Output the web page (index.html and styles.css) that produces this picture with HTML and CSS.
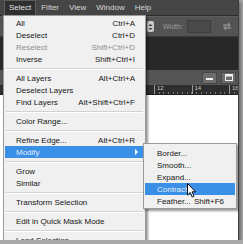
FILE: index.html
```html
<!doctype html>
<html lang=en>
  <head>
    <meta charset=utf-8 />
    <title>Select menu</title>
    <link rel="stylesheet" href="styles.css">
  </head>
  <body>
    <div class="screen">
      <div class="menubar">
        <span class="menubar-item menubar-open">Select</span>
        <span class="menubar-item">Filter</span>
        <span class="menubar-item">View</span>
        <span class="menubar-item">Window</span>
        <span class="menubar-item">Help</span>
      </div>

      <div class="options">
        <span class="spinner">
          <svg width="5" height="8" viewBox="0 0 5 8"><path d="M0.5 3 L2.5 1 L4.5 3 Z M0.5 5 L2.5 7 L4.5 5 Z" fill="#3a3a3a"/></svg>
        </span>
        <span class="options-label">Width:</span>
        <span class="options-input"></span>
        <svg class="swap" width="10" height="9" viewBox="0 0 10 9">
          <path d="M1 3 H8 M6 1 L8 3 L6 5 M9 6 H2 M4 4 L2 6 L4 8" stroke="#8a8a8a" stroke-width="1.3" fill="none"/>
        </svg>
      </div>

      <div class="pasteboard"></div>

      <div class="tabbar">
        <span class="win-btn"><svg width="7" height="7" viewBox="0 0 7 7"><rect x="0" y="4" width="7" height="2" fill="#f2f2f2"/></svg></span>
        <span class="win-btn"><svg width="8" height="7" viewBox="0 0 8 7"><rect x="0.5" y="0.5" width="7" height="6" fill="none" stroke="#f2f2f2"/><rect x="0.5" y="0.5" width="7" height="2" fill="#f2f2f2"/></svg></span>
      </div>

      <div class="ruler">
        <span class="ruler-mark">12</span>
        <span class="ruler-mark">14</span>
        <span class="ruler-mark">16</span>
      </div>

      <div class="canvas"></div>

      <div class="menu">
        <div class="item"><span>All</span><span>Ctrl+A</span></div>
        <div class="item"><span>Deselect</span><span>Ctrl+D</span></div>
        <div class="item disabled"><span>Reselect</span><span>Shift+Ctrl+D</span></div>
        <div class="item"><span>Inverse</span><span>Shift+Ctrl+I</span></div>
        <div class="sep"></div>
        <div class="item"><span>All Layers</span><span>Alt+Ctrl+A</span></div>
        <div class="item"><span>Deselect Layers</span></div>
        <div class="item"><span>Find Layers</span><span>Alt+Shift+Ctrl+F</span></div>
        <div class="sep"></div>
        <div class="item"><span>Color Range...</span></div>
        <div class="sep"></div>
        <div class="item"><span>Refine Edge...</span><span>Alt+Ctrl+R</span></div>
        <div class="item active"><span>Modify</span><span class="arrow"></span></div>
        <div class="sep"></div>
        <div class="item"><span>Grow</span></div>
        <div class="item"><span>Similar</span></div>
        <div class="sep"></div>
        <div class="item"><span>Transform Selection</span></div>
        <div class="sep"></div>
        <div class="item"><span>Edit in Quick Mask Mode</span></div>
        <div class="sep"></div>
        <div class="item"><span>Load Selection...</span></div>
      </div>

      <div class="submenu">
        <div class="item"><span>Border...</span></div>
        <div class="item"><span>Smooth...</span></div>
        <div class="item"><span>Expand...</span></div>
        <div class="item active"><span>Contract...</span></div>
        <div class="item"><span>Feather...</span><span>Shift+F6</span></div>
      </div>

      <svg class="cursor" width="10" height="15" viewBox="0 0 10 15">
        <path d="M0.5 0.5 V12 L3.2 9.4 L5.2 14 L7 13.2 L5 8.8 H8.6 Z" fill="#fff" stroke="#111" stroke-width="1"/>
      </svg>
    </div>
  </body>
</html>
```

FILE: styles.css
```css
body {
  background: #a9a9a9;
  margin: 0;
  padding: 0;
  font-family: 'Liberation Sans', Arial, sans-serif;
  font-size: 8px;
}

.screen {
  position: relative;
  width: 238px;
  height: 240px;
  overflow: hidden;
  background: #ffffff;
  border-right: 1px solid #3c3c3c;
  box-shadow: 2px 2px 3px #6a6a6a;
  display: flex;
  flex-direction: column;
}

.menubar {
  height: 16px;
  flex: 0 0 16px;
  display: flex;
  align-items: stretch;
  padding-left: 4px;
  background: #454545;
  border-bottom: 1px solid #2c2c2c;
  box-sizing: border-box;
}

.menubar-item {
  padding: 0 5px;
  color: #d8d8d8;
  line-height: 15px;
  font-size: 8px;
}

.menubar-open {
  background: #2f2f2f;
  box-shadow: inset 1px 1px 0 #5c5c5c, inset -1px 0 0 #5c5c5c;
  color: #e6e6e6;
}

.options {
  flex: 0 0 21px;
  display: flex;
  align-items: center;
  background: #535353;
  border-top: 1px solid #5e5e5e;
  border-bottom: 1px solid #3a3a3a;
  box-sizing: border-box;
  padding-left: 147px;
}

.spinner {
  display: flex;
  align-items: center;
  justify-content: center;
  width: 7px;
  height: 11px;
  background: #c9c9c9;
  border-radius: 2px;
}

.options-label {
  margin-left: 9px;
  color: #9c9c9c;
  font-size: 7px;
}

.options-input {
  margin-left: 4px;
  width: 22px;
  height: 11px;
  background: #4a4a4a;
  border: 1px solid #3d3d3d;
}

.swap {
  margin-left: 11px;
}

.pasteboard {
  flex: 0 0 33px;
  background: #282828;
}

.tabbar {
  flex: 0 0 15px;
  display: flex;
  justify-content: flex-end;
  align-items: center;
  gap: 4px;
  padding-right: 2px;
  background: #555555;
  box-sizing: border-box;
}

.win-btn {
  width: 15px;
  height: 12px;
  display: flex;
  align-items: center;
  justify-content: center;
  background: #6c6c6c;
  border: 1px solid #474747;
  box-sizing: border-box;
}

.ruler {
  flex: 0 0 10px;
  display: flex;
  padding-left: 154px;
  background: #2e2e2e repeating-linear-gradient(90deg, #7a7a7a 0 1px, transparent 1px 4.6875px) 154px 7px / 100% 3px no-repeat;
  border-bottom: 1px solid #1e1e1e;
  box-sizing: border-box;
}

.ruler-mark {
  flex: 0 0 37.5px;
  box-sizing: border-box;
  border-left: 1px solid #9a9a9a;
  padding-left: 2px;
  color: #c8c8c8;
  font-size: 6px;
  line-height: 7px;
}

.canvas {
  flex: 1;
  background: #ffffff;
}

.menu {
  position: absolute;
  left: 3px;
  top: 15px;
  width: 143px;
  padding: 1px 1px 0;
  background: #f0f0f0;
  border: 1px solid #9a9a9a;
  box-shadow: 2px 2px 2px rgba(0, 0, 0, 0.4);
  box-sizing: border-box;
}

.item {
  display: flex;
  justify-content: space-between;
  align-items: center;
  height: 12px;
  padding: 0 9px 0 11px;
  color: #161616;
  white-space: nowrap;
}

.item.disabled {
  color: #8d8d8d;
}

.item.active {
  background: #3a8fe6;
  color: #e4eefa;
}

.arrow {
  width: 0;
  height: 0;
  margin-right: -3px;
  border-left: 3px solid #ffffff;
  border-top: 3px solid transparent;
  border-bottom: 3px solid transparent;
}

.sep {
  margin: 3px 1px 2px;
  border-top: 1px solid #d2d2d2;
  border-bottom: 1px solid #ffffff;
}

.submenu {
  position: absolute;
  left: 143px;
  top: 143px;
  width: 94px;
  padding: 3px 1px 1px;
  background: #f0f0f0;
  border: 1px solid #9a9a9a;
  box-shadow: 2px 2px 2px rgba(0, 0, 0, 0.4);
  box-sizing: border-box;
}

.submenu .item {
  padding: 0 11px 0 12px;
}

.cursor {
  position: absolute;
  left: 187px;
  top: 183px;
}
```
